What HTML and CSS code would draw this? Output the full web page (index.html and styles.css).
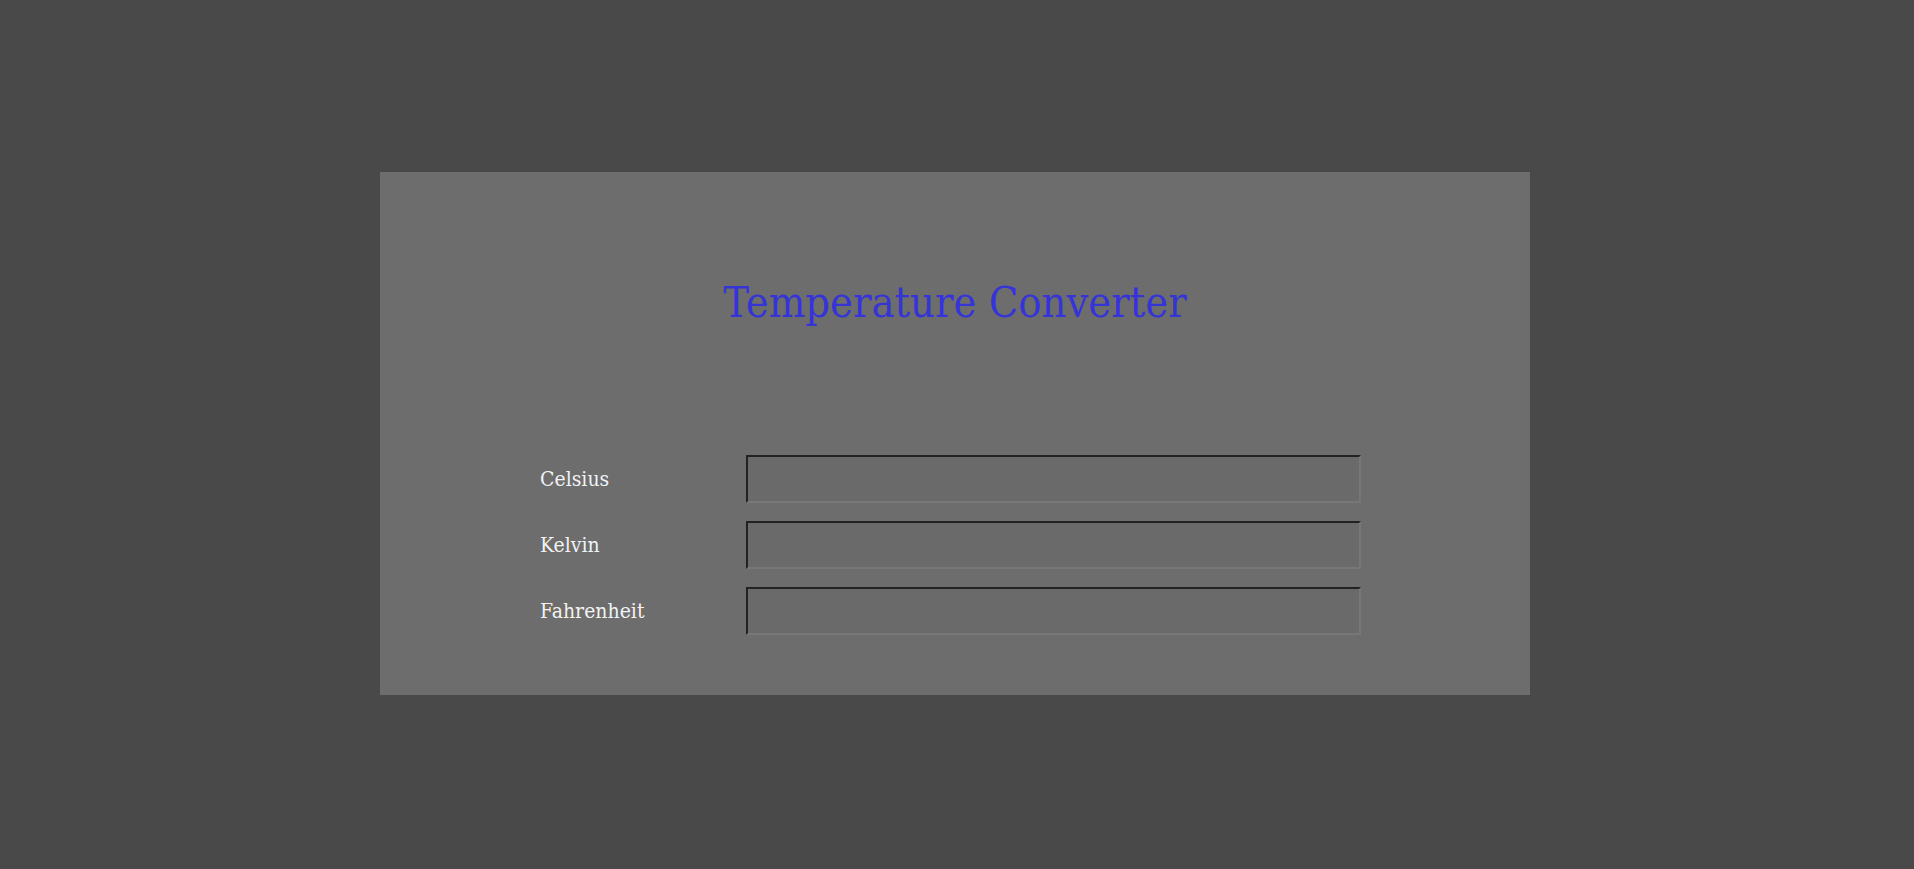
FILE: index.html
```html
<!DOCTYPE html>
<html lang="en">
<head>
<meta charset="utf-8">
<title>Temperature Converter</title>
<link rel="stylesheet" href="styles.css">
</head>
<body>
<main class="card">
  <h1 class="title">Temperature Converter</h1>
  <form class="form">
    <div class="row">
      <label class="label" for="c">Celsius</label>
      <input class="field" id="c" type="text">
    </div>
    <div class="row">
      <label class="label" for="k">Kelvin</label>
      <input class="field" id="k" type="text">
    </div>
    <div class="row">
      <label class="label" for="f">Fahrenheit</label>
      <input class="field" id="f" type="text">
    </div>
  </form>
</main>
</body>
</html>
```
FILE: styles.css
```css
html, body {
  margin: 0;
  padding: 0;
  background: #494949;
  font-family: "DejaVu Serif Condensed", "DejaVu Serif", "Liberation Serif", serif;
}
body {
  padding-top: 172px;
}
.card {
  box-sizing: border-box;
  width: 1150px;
  height: 523px;
  margin-left: 380px;
  background: #6d6d6d;
  padding: 100px 0 0 160px;
}
.title {
  margin: 0 0 0 -160px;
  text-align: center;
  font-weight: normal;
  font-size: 43px;
  line-height: 60px;
  color: #3535d5;
}
.form {
  margin-top: 123px;
  display: flex;
  flex-direction: column;
  gap: 18px;
}
.row {
  display: flex;
  align-items: center;
}
.label {
  width: 206px;
  font-size: 21px;
  color: #f2f2f2;
}
.field {
  box-sizing: border-box;
  width: 615px;
  height: 48px;
  margin: 0;
  padding: 0 8px;
  background: #6a6a6a;
  border: 2px solid #222;
  border-right-color: #777;
  border-bottom-color: #777;
  font-size: 19px;
}
```
